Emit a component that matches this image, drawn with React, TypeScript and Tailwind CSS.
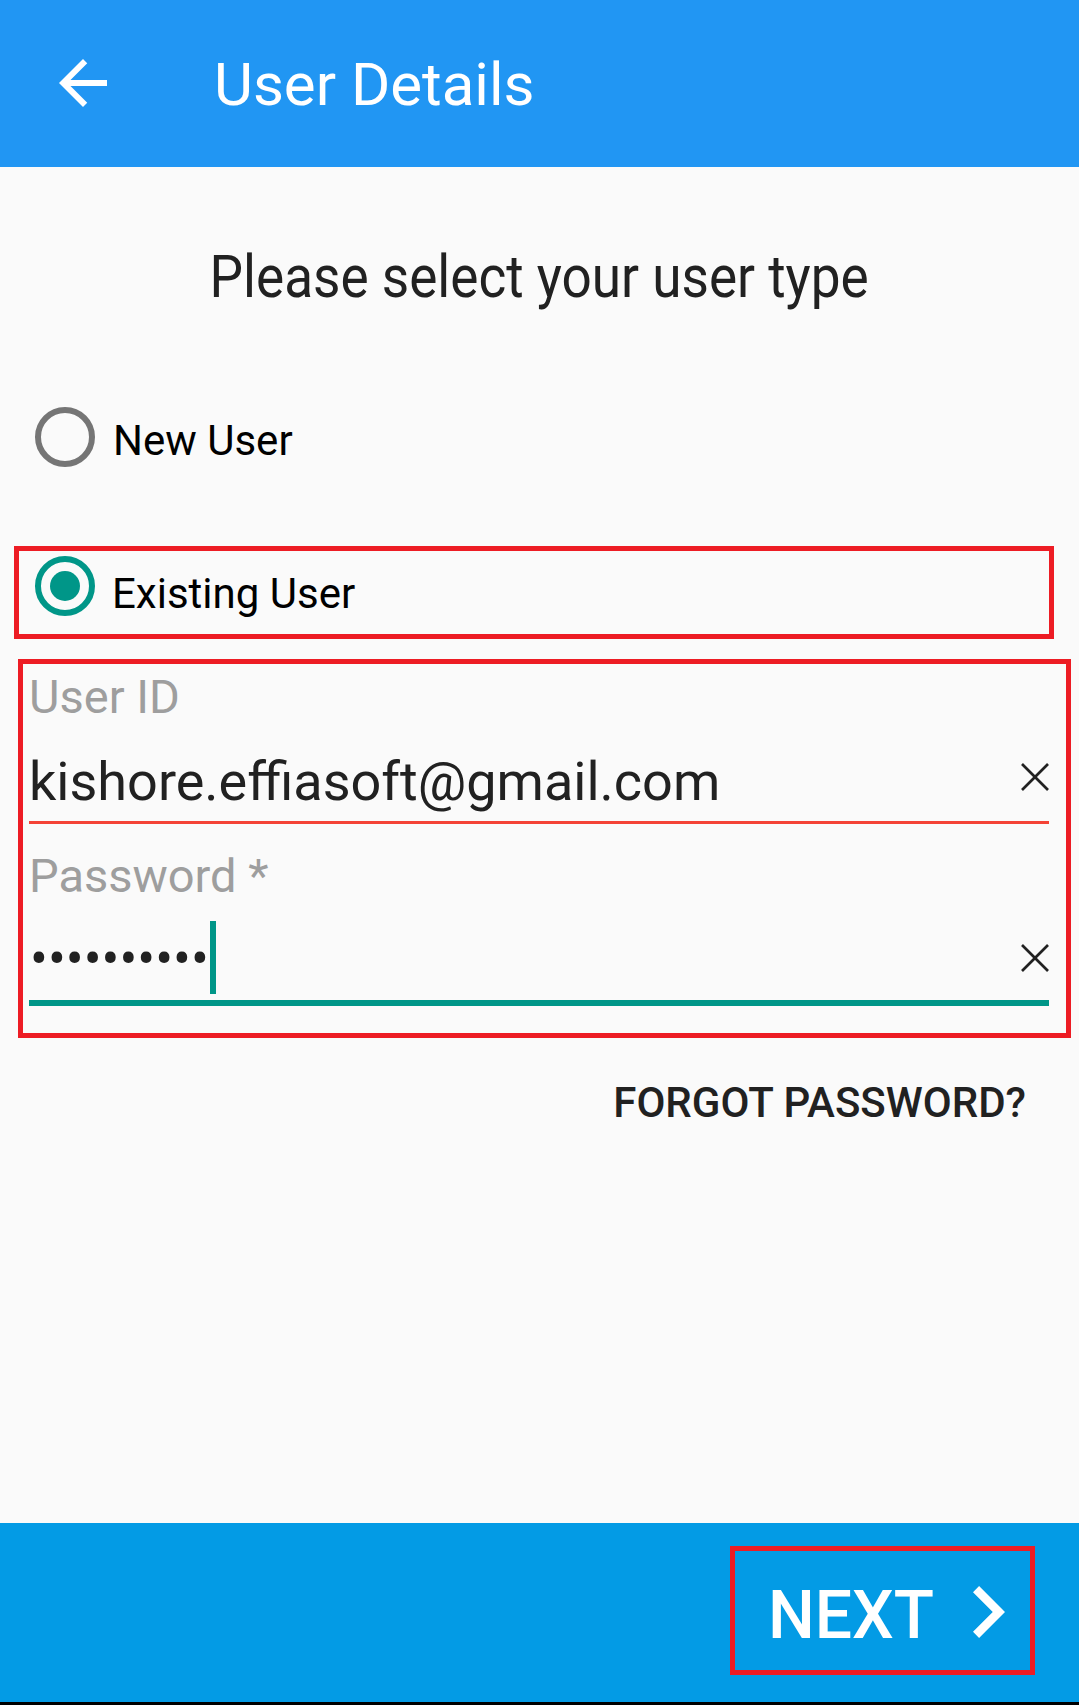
import React from "react";

function BackArrow() {
  return (
    <svg viewBox="4 4 16 16" className="w-[48px] h-[48px] shrink-0" fill="#ffffff">
      <path d="M20 11H7.83l5.59-5.59L12 4l-8 8 8 8 1.41-1.41L7.83 13H20v-2z" />
    </svg>
  );
}

function Chevron() {
  return (
    <svg viewBox="8.59 6 7.41 12" className="w-[32px] h-[52px] shrink-0" fill="#ffffff">
      <path d="M10 6L8.59 7.41 13.17 12l-4.58 4.59L10 18l6-6z" />
    </svg>
  );
}

function ClearIcon() {
  return (
    <svg viewBox="0 0 28 28" className="w-[28px] h-[28px] shrink-0" stroke="#212121" strokeWidth="2.6">
      <line x1="1" y1="1" x2="27" y2="27" />
      <line x1="27" y1="1" x2="1" y2="27" />
    </svg>
  );
}

function Radio({ checked }: { checked?: boolean }) {
  return checked ? (
    <div className="w-[60px] h-[60px] shrink-0 rounded-full border-[6px] border-[#009688] flex items-center justify-center">
      <div className="w-[30px] h-[30px] rounded-full bg-[#009688]" />
    </div>
  ) : (
    <div className="w-[60px] h-[60px] shrink-0 rounded-full border-[6px] border-[#757575]" />
  );
}

export default function App() {
  return (
    <div className="h-[1705px] w-full flex flex-col bg-[#fafafa] font-['Roboto',sans-serif] overflow-hidden">
      {/* toolbar */}
      <header className="h-[167px] shrink-0 bg-[#2196f3] flex items-start">
        <div className="ml-[59px] mt-[59px]">
          <BackArrow />
        </div>
        <h1 className="ml-[107px] mt-[55px] text-[60px] leading-none text-white font-normal">User Details</h1>
      </header>

      <main className="flex-1 flex flex-col">
        <div className="mt-[80px] flex justify-center">
          <p className="text-[59px] leading-none text-[#212121] scale-x-[0.9] whitespace-nowrap">
            Please select your user type
          </p>
        </div>

        <label className="mt-[101px] ml-[35px] flex items-start">
          <Radio />
          <span className="ml-[18px] mt-[13px] text-[42px] leading-none text-black">New User</span>
        </label>

        <div className="mt-[79px] ml-[14px] w-[1040px] h-[93px] border-[5px] border-[#ed1c24] flex items-start">
          <div className="ml-[16px] mt-[5px]">
            <Radio checked />
          </div>
          <span className="ml-[17px] mt-[22px] text-[42px] leading-none text-black">Existing User</span>
        </div>

        <div className="mt-[20px] ml-[18px] w-[1053px] h-[379px] border-[5px] border-[#ed1c24]">
          <div className="ml-[6px] mr-[17px] flex flex-col">
            <span className="mt-[9px] text-[47px] leading-none text-[#9e9e9e]">User ID</span>
            <div className="mt-[35px] flex items-start justify-between">
              <span className="text-[54px] leading-none text-[#212121]">kishore.effiasoft@gmail.com</span>
              <div className="mt-[8px]">
                <ClearIcon />
              </div>
            </div>
            <div className="mt-[12px] h-[3px] bg-[#f44336]" />

            <span className="mt-[28px] text-[47px] leading-none text-[#9e9e9e]">Password *</span>
            <div className="mt-[22px] h-[73px] flex items-center justify-between">
              <div className="flex items-center h-full">
                <span className="ml-[1px] mt-[3px] text-[53px] leading-none text-[#212121]">••••••••••</span>
                <div className="ml-[1px] w-[6px] h-[73px] bg-[#009688]" />
              </div>
              <ClearIcon />
            </div>
            <div className="mt-[6px] h-[6px] bg-[#009688]" />
          </div>
        </div>

        <div className="mt-[44px] mr-[53px] flex justify-end">
          <button className="text-[42px] leading-none font-medium text-[#212121]">FORGOT PASSWORD?</button>
        </div>
      </main>

      {/* bottom action bar */}
      <footer className="h-[182px] shrink-0 bg-[#039be5] border-b-[3px] border-black flex justify-end items-start">
        <button className="mt-[23px] mr-[44px] w-[305px] h-[129px] border-[5px] border-[#ed1c24] flex items-start">
          <span className="ml-[33px] mt-[32px] text-[66px] leading-none font-medium text-white">NEXT</span>
          <div className="ml-[39px] mt-[35px]">
            <Chevron />
          </div>
        </button>
      </footer>
    </div>
  );
}
